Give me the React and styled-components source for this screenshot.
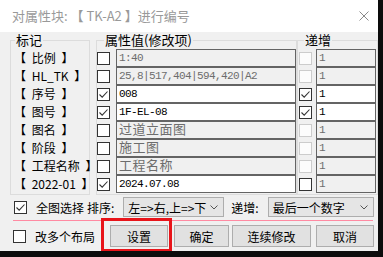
import React from 'react'
import styled, { createGlobalStyle } from 'styled-components'

const Global = createGlobalStyle`
  body {
    margin: 0;
    background: #0c0c0c;
    font-family: "Noto Sans CJK SC", "Liberation Sans", sans-serif;
  }
`

const Window = styled.div`
  width: 378px;
  height: 251px;
  background: #f0f0f0;
  display: flex;
  flex-direction: column;
`

const TitleBar = styled.div`
  height: 32px;
  background: #fff;
  display: flex;
  align-items: center;
  padding-left: 12px;
  box-sizing: border-box;
`

const Title = styled.div`
  flex: 1;
  color: #999;
  font-size: 13px;
  line-height: 14px;
`

const Close = styled.div`
  width: 10px;
  height: 10px;
  margin-right: 9px;
  display: flex;
`

const Groups = styled.div`
  display: flex;
  margin-top: 1px;
`

const Group = styled.fieldset`
  margin: 0 0 0 ${p => p.$left}px;
  padding: 2px 0 1px ${p => p.$pad}px;
  border: 1px solid #dcdcdc;
  width: ${p => p.$width}px;
  height: 162px;
  box-sizing: border-box;
  min-width: 0;
`

const Legend = styled.legend`
  font-size: 13px;
  line-height: 14px;
  padding: 0 1px;
  margin-left: ${p => p.$offset}px;
  color: #000;
`

const Row = styled.div`
  display: flex;
  align-items: center;
  height: 18px;
`

const Label = styled.div`
  font-size: 12px;
  line-height: 18px;
  white-space: pre;
  word-spacing: 3px;
  color: #000;
`

const Box = styled.div`
  width: 13px;
  height: 13px;
  box-sizing: border-box;
  border: 1px solid ${p => (p.$disabled ? '#cccccc' : '#333333')};
  background: ${p => (p.$disabled ? '#fcfcfc' : '#fff')};
  margin-left: ${p => p.$ml || 0}px;
  margin-right: ${p => p.$mr || 0}px;
  display: flex;
  flex-shrink: 0;
`

const Field = styled.div`
  width: ${p => p.$width}px;
  height: 18px;
  box-sizing: border-box;
  border: 1px solid #646464;
  background: ${p => (p.$on ? '#fff' : '#f0f0f0')};
  color: ${p => (p.$on ? '#000' : '#6d6d6d')};
  padding: 0 0 ${p => (p.$cjk ? 2 : 0)}px 2px;
  margin-left: ${p => p.$ml}px;
  display: flex;
  align-items: center;
  white-space: pre;
  font-family: ${p => (p.$cjk ? '"Noto Sans CJK SC", sans-serif' : '"Liberation Mono", "Noto Sans CJK SC", monospace')};
  font-size: ${p => (p.$cjk ? '13px' : '11px')};
  letter-spacing: ${p => (p.$cjk ? '0.5px' : '-0.6px')};
  line-height: 14px;
`

const Options = styled.div`
  display: flex;
  align-items: center;
  height: 20px;
  margin-top: 2px;
  padding-left: 14px;
`

const Text = styled.span`
  font-size: 12px;
  color: #000;
  margin-left: ${p => p.$ml || 0}px;
  white-space: pre;
`

const Combo = styled.div`
  width: ${p => p.$width}px;
  height: 20px;
  box-sizing: border-box;
  margin-left: ${p => p.$ml}px;
  border: 1px solid #adadad;
  background: #e5e5e5;
  display: flex;
  align-items: center;
  justify-content: space-between;
  padding: 0 5px 0 4px;
  font-size: 12px;
  white-space: pre;
`

const Divider = styled.div`
  height: 1px;
  background: #ff8aa2;
  margin: 3px 5px 0 13px;
`

const Buttons = styled.div`
  display: flex;
  align-items: center;
  height: 22px;
  margin-top: 4px;
  padding-left: 13px;
`

const Button = styled.div`
  position: relative;
  width: ${p => p.$width}px;
  height: 22px;
  box-sizing: border-box;
  margin-left: ${p => p.$ml}px;
  border: 1px solid #adadad;
  background: #e1e1e1;
  font-size: 12px;
  display: flex;
  align-items: center;
  justify-content: center;
`

const Highlight = styled.div`
  position: absolute;
  left: -10px;
  top: -8px;
  right: -5px;
  bottom: -6px;
  border: 3px solid #e8141a;
`

const Check = () => (
  <svg width="11" height="11" viewBox="0 0 11 11">
    <polyline points="1.5,5.5 4.2,8.2 9.5,2.5" fill="none" stroke="#333" strokeWidth="1.1" />
  </svg>
)

const CheckBox = ({ checked, disabled, ml, mr }) => (
  <Box $disabled={disabled} $ml={ml} $mr={mr}>{checked && <Check />}</Box>
)

const Chevron = () => (
  <svg width="8" height="5" viewBox="0 0 8 5">
    <polyline points="0.5,0.5 4,4 7.5,0.5" fill="none" stroke="#555" strokeWidth="1" />
  </svg>
)

const rows = [
  { label: '【 比例 】', value: '1:40', on: false, inc: false, incOn: false },
  { label: '【 HL_TK 】', value: '25,8|517,404|594,420|A2', on: false, inc: false, incOn: false },
  { label: '【 序号 】', value: '008', on: true, inc: true, incOn: true },
  { label: '【 图号 】', value: '1F-EL-08', on: true, inc: true, incOn: true },
  { label: '【 图名 】', value: '过道立面图', cjk: true, on: false, inc: false, incOn: false },
  { label: '【 阶段 】', value: '施工图', cjk: true, on: false, inc: false, incOn: false },
  { label: '【 工程名称 】', value: '工程名称', cjk: true, on: false, inc: false, incOn: false },
  { label: '【 2022-01 】', value: '2024.07.08', on: true, inc: false, incOn: true },
]

export default function App() {
  return (
    <>
      <Global />
      <Window>
        <TitleBar>
          <Title>对属性块: 【 TK-A2 】进行编号</Title>
          <Close>
            <svg width="10" height="10" viewBox="0 0 10 10">
              <path d="M0.5 0.5 L9.5 9.5 M9.5 0.5 L0.5 9.5" stroke="#8a8a8a" strokeWidth="1" />
            </svg>
          </Close>
        </TitleBar>
        <Groups>
          <Group $left={10} $width={80} $pad={3}>
            <Legend $offset={1}>标记</Legend>
            {rows.map(r => (
              <Row key={r.label}><Label>{r.label}</Label></Row>
            ))}
          </Group>
          <Group $left={6} $width={201} $pad={0}>
            <Legend $offset={7}>属性值(修改项)</Legend>
            {rows.map(r => (
              <Row key={r.label}>
                <CheckBox checked={r.on} />
                <Field $width={180} $ml={6} $on={r.on} $cjk={r.cjk}>{r.value}</Field>
              </Row>
            ))}
          </Group>
          <Group $left={0} $width={81} $pad={0}>
            <Legend $offset={6}>递增</Legend>
            {rows.map(r => (
              <Row key={r.label}>
                <CheckBox checked={r.inc} disabled={!r.incOn} ml={1} />
                <Field $width={60} $ml={4} $on={r.inc}>1</Field>
              </Row>
            ))}
          </Group>
        </Groups>
        <Options>
          <CheckBox checked />
          <Text $ml={9}>全图选择</Text>
          <Text $ml={3}>排序:</Text>
          <Combo $width={101} $ml={9}>左=&gt;右,上=&gt;下<Chevron /></Combo>
          <Text $ml={7}>递增:</Text>
          <Combo $width={106} $ml={9}>最后一个数字<Chevron /></Combo>
        </Options>
        <Divider />
        <Buttons>
          <CheckBox />
          <Text $ml={9}>改多个布局</Text>
          <Button $width={58} $ml={15}>设置<Highlight /></Button>
          <Button $width={55} $ml={6}>确定</Button>
          <Button $width={79} $ml={3}>连续修改</Button>
          <Button $width={58} $ml={5}>取消</Button>
        </Buttons>
      </Window>
    </>
  )
}
